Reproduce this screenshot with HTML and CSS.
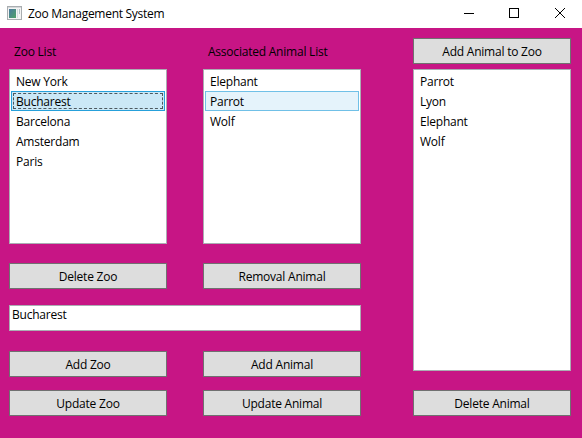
FILE: index.html
```html
<!DOCTYPE html>
<html lang="en">
<head>
<meta charset="utf-8">
<title>Zoo Management System</title>
<link rel="stylesheet" href="styles.css">
</head>
<body>
<header class="titlebar">
  <svg class="app-icon" width="15" height="14" viewBox="0 0 15 14">
    <defs><linearGradient id="pane" x1="0" y1="0" x2="1" y2="1"><stop offset="0" stop-color="#4a78a0"/><stop offset="1" stop-color="#4fa367"/></linearGradient></defs>
    <rect x=".5" y=".5" width="14" height="13" fill="#f4f4f4" stroke="#a9adb0"/>
    <path d="M1 1.5h13" stroke="#d5d8da"/>
    <rect x="2" y="3" width="7" height="9" fill="url(#pane)"/>
    <rect x="10" y="3" width="1" height="9" fill="#d5dde0"/>
    <rect x="12" y="3" width="1" height="5" fill="#b4c3c8"/>
  </svg>
  <h1 class="title">Zoo Management System</h1>
  <svg class="window-controls" width="102" height="12" viewBox="0 0 102 12" fill="none" stroke="#000" shape-rendering="crispEdges">
    <path d="M0 6.5h10"/>
    <rect x="45.5" y="1.5" width="9" height="9"/>
    <path d="M91 1l10 10M101 1L91 11" shape-rendering="auto"/>
  </svg>
</header>
<main class="content">
  <section class="main-panel">
    <h2 class="label">Zoo List</h2>
    <h2 class="label">Associated Animal List</h2>
    <ul class="list">
      <li>New York</li>
      <li class="selected">Bucharest</li>
      <li>Barcelona</li>
      <li>Amsterdam</li>
      <li>Paris</li>
    </ul>
    <ul class="list">
      <li>Elephant</li>
      <li class="hovered">Parrot</li>
      <li>Wolf</li>
    </ul>
    <button class="btn">Delete Zoo</button>
    <button class="btn">Removal Animal</button>
    <div class="textbox">Bucharest</div>
    <button class="btn">Add Zoo</button>
    <button class="btn">Add Animal</button>
    <button class="btn">Update Zoo</button>
    <button class="btn">Update Animal</button>
  </section>
  <section class="side-panel">
    <button class="btn">Add Animal to Zoo</button>
    <ul class="list">
      <li>Parrot</li>
      <li>Lyon</li>
      <li>Elephant</li>
      <li>Wolf</li>
    </ul>
    <button class="btn">Delete Animal</button>
  </section>
</main>
</body>
</html>
```
FILE: styles.css
```css
* { box-sizing: border-box; }
body {
  margin: 0;
  width: 582px;
  height: 438px;
  overflow: hidden;
  background: #c71585;
  color: #000;
  font: 12px/16px "Open Sans", "Noto Sans", sans-serif;
  letter-spacing: -0.22px;
}
h1, h2, ul { margin: 0; padding: 0; font: inherit; }
.titlebar {
  display: flex;
  align-items: center;
  height: 28px;
  padding: 0 16px 3px 7px;
  background: #fff;
}
.title { margin-left: 6px; padding-top: 2px; letter-spacing: -0.28px; }
.window-controls { margin-left: auto; }
.content {
  display: flex;
  justify-content: space-between;
  padding: 10px 11px 22px 9px;
}
.main-panel {
  display: grid;
  grid-template-columns: 158px 158px;
  grid-template-rows: 31px 175px 19px 26px 16px 26px 20px 26px 13px 26px;
  column-gap: 36px;
}
.label { grid-row: 1; padding: 6px 0 0 5px; }
.main-panel .list { grid-row: 2; }
.main-panel .btn:nth-of-type(-n+2) { grid-row: 4; }
.textbox {
  grid-row: 6;
  grid-column: 1 / -1;
  padding: 1px 2px;
  background: #fff;
  border: 1px solid #abadb3;
}
.main-panel .btn:nth-of-type(n+3) { grid-row: 8; }
.main-panel .btn:nth-of-type(n+5) { grid-row: 10; }
.side-panel {
  display: grid;
  grid-template-columns: 158px;
  grid-template-rows: 26px 302px 26px;
  row-gap: 5px;
}
.side-panel .btn:last-child { margin-top: 14px; height: 26px; }
.btn {
  height: 26px;
  padding: 2px 0 0;
  background: #ddd;
  border: 1px solid #707070;
  border-radius: 0;
  color: #000;
  font: inherit;
  letter-spacing: inherit;
}
.list {
  padding: 1px;
  background: #fff;
  border: 1px solid #abadb3;
  list-style: none;
}
.list li {
  height: 20px;
  padding: 2px 4px 0;
  border: 1px solid transparent;
}
.list .selected {
  background: #cbe8f6;
  border-color: #26a0da;
  outline: 1px dashed #4c5960;
  outline-offset: -3px;
}
.list .hovered { background: #e5f3fb; border-color: #70c0e7; }
```
